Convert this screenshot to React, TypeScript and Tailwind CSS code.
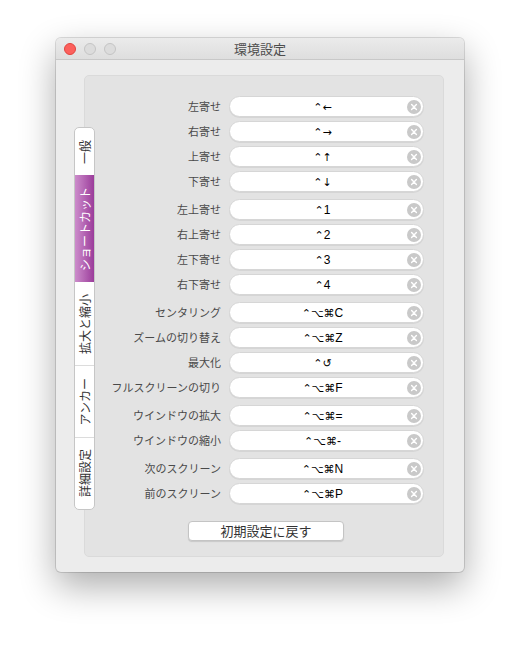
const jp = "font-['Noto_Sans_CJK_JP','Noto_Sans',sans-serif]";

const groups: { label: string; mods: string; key: string }[][] = [
  [
    { label: "左寄せ", mods: "⌃←", key: "" },
    { label: "右寄せ", mods: "⌃→", key: "" },
    { label: "上寄せ", mods: "⌃↑", key: "" },
    { label: "下寄せ", mods: "⌃↓", key: "" },
  ],
  [
    { label: "左上寄せ", mods: "⌃", key: "1" },
    { label: "右上寄せ", mods: "⌃", key: "2" },
    { label: "左下寄せ", mods: "⌃", key: "3" },
    { label: "右下寄せ", mods: "⌃", key: "4" },
  ],
  [
    { label: "センタリング", mods: "⌃⌥⌘", key: "C" },
    { label: "ズームの切り替え", mods: "⌃⌥⌘", key: "Z" },
    { label: "最大化", mods: "⌃↺", key: "" },
    { label: "フルスクリーンの切り", mods: "⌃⌥⌘", key: "F" },
  ],
  [
    { label: "ウインドウの拡大", mods: "⌃⌥⌘", key: "=" },
    { label: "ウインドウの縮小", mods: "⌃⌥⌘", key: "-" },
  ],
  [
    { label: "次のスクリーン", mods: "⌃⌥⌘", key: "N" },
    { label: "前のスクリーン", mods: "⌃⌥⌘", key: "P" },
  ],
];

const tabs = ["一般", "ショートカット", "拡大と縮小", "アンカー", "詳細設定"];

function ClearIcon() {
  return (
    <svg width="14" height="14" viewBox="0 0 14 14" className="shrink-0">
      <circle cx="7" cy="7" r="7" fill="#c9c9c9" />
      <path d="M4.6 4.6 L9.4 9.4 M9.4 4.6 L4.6 9.4" stroke="#fff" strokeWidth="1.4" strokeLinecap="round" />
    </svg>
  );
}

function ShortcutRow({ label, mods, keyName }: { label: string; mods: string; keyName: string }) {
  return (
    <div className="flex h-[21px] items-center gap-2">
      <div className={`w-[136px] text-right text-[11px] leading-none text-[#4a4a4a] ${jp}`}>{label}</div>
      <div className="flex h-[21px] w-[195px] items-center rounded-full border border-[#d6d6d6] bg-white pl-2 pr-[2px] shadow-[0_1px_0_rgba(0,0,0,0.06)]">
        <span className="flex-1 text-center text-[12px] leading-none text-black">
          <span className="font-['DejaVu_Sans',sans-serif] text-[11px]">{mods}</span>
          <span className="font-['Liberation_Sans',sans-serif]">{keyName}</span>
        </span>
        <ClearIcon />
      </div>
    </div>
  );
}

export default function App() {
  return (
    <div className="h-[646px] w-[520px] overflow-hidden bg-white pl-[56px] pt-[38px]">
      <div className="flex h-[534px] w-[408px] flex-col overflow-hidden rounded-[5px] bg-[#ececec] shadow-[0_0_0_1px_rgba(0,0,0,0.13),0_14px_36px_rgba(0,0,0,0.33)]">
        <div className="relative flex h-[22px] shrink-0 items-center justify-center border-b border-[#c8c8c8] bg-gradient-to-b from-[#ebebeb] to-[#dedede]">
          <div className="absolute left-[8px] top-[5px] flex gap-2">
            <span className="h-3 w-3 rounded-full border border-[#e0443e] bg-[#fc605c]" />
            <span className="h-3 w-3 rounded-full border border-[#c4c4c4] bg-[#dcdcdc]" />
            <span className="h-3 w-3 rounded-full border border-[#c4c4c4] bg-[#dcdcdc]" />
          </div>
          <span className={`text-[13px] text-[#4d4d4d] ${jp}`}>環境設定</span>
        </div>
        <div className="pl-[28px] pt-[15px]">
          <div className="relative h-[482px] w-[360px] rounded-[5px] border border-[#dadada] bg-[#e3e3e3] pt-[20px]">
            <div className="absolute -left-[11px] top-[51px] flex w-[21px] flex-col overflow-hidden rounded-[5px] border border-[#c6c6c6] bg-white">
              {tabs.map((t, i) => (
                <div
                  key={t}
                  className={
                    i === 1
                      ? "flex items-center justify-center bg-gradient-to-r from-[#cc8ccb] to-[#9b3b9b] py-[11.5px] text-white"
                      : `flex items-center justify-center py-[11.5px] text-[#333] ${i > 2 ? "border-t border-[#dcdcdc]" : ""}`
                  }
                >
                  <span
                    className={`rotate-180 text-[12px] leading-[19px] [text-orientation:sideways] [writing-mode:vertical-rl] ${jp}`}
                  >
                    {t}
                  </span>
                </div>
              ))}
            </div>
            <div className="flex flex-col gap-[7px]">
              {groups.map((g, gi) => (
                <div key={gi} className="flex flex-col gap-[4px]">
                  {g.map((r) => (
                    <ShortcutRow key={r.label} label={r.label} mods={r.mods} keyName={r.key} />
                  ))}
                </div>
              ))}
            </div>
            <div className="ml-[103px] mt-[14px]">
              <button
                className={`h-[20px] w-[156px] rounded-[4px] border border-[#c4c4c4] bg-white text-[13px] leading-none text-[#333] shadow-[0_1px_1px_rgba(0,0,0,0.12)] ${jp}`}
              >
                初期設定に戻す
              </button>
            </div>
          </div>
        </div>
      </div>
    </div>
  );
}
